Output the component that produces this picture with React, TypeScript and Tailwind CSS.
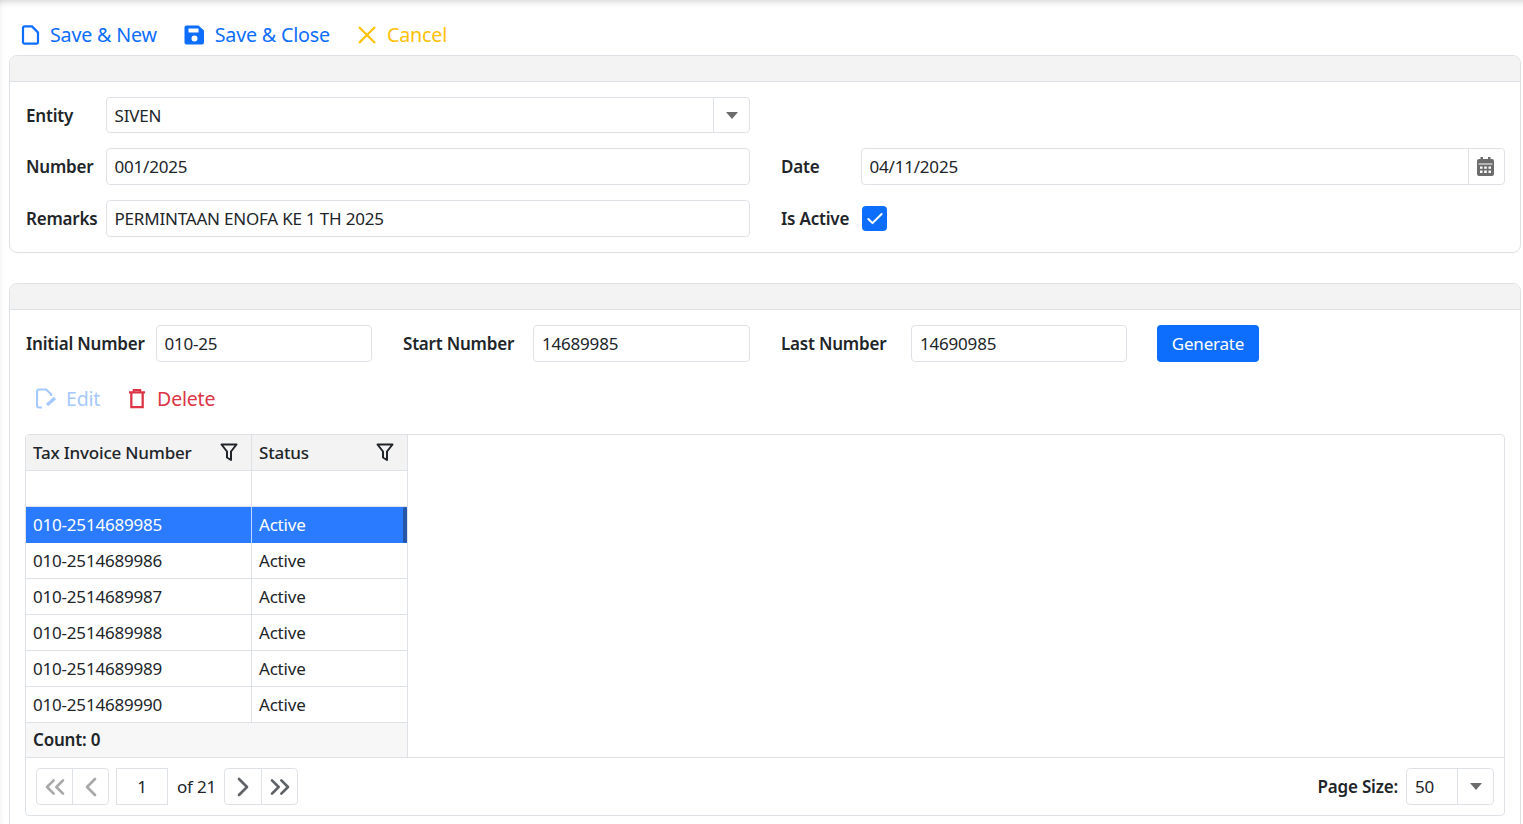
import { Check, ChevronLeft, ChevronRight, ChevronsLeft, ChevronsRight } from "lucide-react";

const rows = ["010-2514689985", "010-2514689986", "010-2514689987", "010-2514689988", "010-2514689989", "010-2514689990"];

function Caret() {
  return (
    <svg width="12" height="7" viewBox="0 0 12 7" className="fill-[#6c6c6c]">
      <path d="M0 0h12L6 7z" />
    </svg>
  );
}

function Filter() {
  return (
    <svg width="18" height="19" viewBox="0 0 18 19" fill="none" stroke="#212529" strokeWidth="2" strokeLinejoin="round">
      <path d="M1.500 1.500h15l-5.500 7v8.500l-4-2.500v-6z" />
    </svg>
  );
}

function Field({ value, className }: { value: string; className: string }) {
  return (
    <div className={`flex items-center border border-[#dee2e6] rounded-[4px] px-[7.5px] bg-white ${className}`}>
      {value}
    </div>
  );
}

function Label({ text, className }: { text: string; className: string }) {
  return <div className={`font-semibold shrink-0 ${className}`}>{text}</div>;
}

export default function App() {
  return (
    <div
      className="h-[824px] overflow-hidden bg-white text-[#212529] text-[17px] shadow-[inset_0_7px_6px_-5px_rgba(0,0,0,0.16),inset_7px_0_6px_-6px_rgba(0,0,0,0.05)] pl-[9px] pr-[2px]"
      style={{ fontFamily: '"Noto Sans", "Open Sans", sans-serif', letterSpacing: "-0.2px" }}
    >
      {/* Barre d'actions */}
      <div className="h-[55px] pt-[15px] flex items-center pl-[12px] text-[19.7px]">
        <div className="flex items-center gap-[10px] text-[#0d6efd] mr-[27px]">
          <svg width="19" height="20" viewBox="0 0 19 20" fill="none" stroke="#0d6efd" strokeWidth="2.2">
            <path d="M2 3a1.600 1.600 0 0 1 1.600-1.600h7.400l6 6V17a1.600 1.600 0 0 1-1.600 1.600H3.600A1.600 1.600 0 0 1 2 17z" />
          </svg>
          <span>Save &amp; New</span>
        </div>
        <div className="flex items-center gap-[10px] text-[#0d6efd] mr-[27px]">
          <svg width="21" height="20" viewBox="0 0 21 20" fill="#0d6efd">
            <path d="M2.500 0.500h12l5.500 5v12a2 2 0 0 1-2 2H2.500a2 2 0 0 1-2-2v-15a2 2 0 0 1 2-2zM4.500 3.500v4h10v-4zM10.500 10.500a3 3 0 1 0 0 6 3 3 0 0 0 0-6z" fillRule="evenodd" />
          </svg>
          <span>Save &amp; Close</span>
        </div>
        <div className="flex items-center gap-[10px] text-[#ffc107]">
          <svg width="20" height="20" viewBox="0 0 20 20" fill="none" stroke="#ffc107" strokeWidth="2.200">
            <path d="M2 2l16 16M18 2L2 18" />
          </svg>
          <span>Cancel</span>
        </div>
      </div>

      {/* Carte entête */}
      <div className="h-[198px] border border-[#dee2e6] rounded-[8px] overflow-hidden">
        <div className="h-[26px] bg-[#f3f3f3] border-b border-[#dee2e6]" />
        <div className="pt-[15px] pl-[16px] pr-[15px] flex flex-col">
          <div className="flex items-center h-[36px]">
            <Label text="Entity" className="w-[80px] pt-px" />
            <div className="w-[644px] h-full flex items-center border border-[#dee2e6] rounded-[4px]">
              <div className="flex-1 px-[7.5px] pt-px">SIVEN</div>
              <div className="w-[36px] h-full border-l border-[#dee2e6] flex items-center justify-center">
                <Caret />
              </div>
            </div>
          </div>
          <div className="flex items-center h-[37px] mt-[15px]">
            <Label text="Number" className="w-[80px]" />
            <Field value="001/2025" className="w-[644px] h-full" />
            <Label text="Date" className="ml-[31px] w-[80px]" />
            <div className="flex-1 h-full flex items-center border border-[#dee2e6] rounded-[4px]">
              <div className="flex-1 px-[7.5px]">04/11/2025</div>
              <div className="w-[36px] h-full border-l border-[#dee2e6] flex items-center justify-center">
                <svg width="17" height="19" viewBox="0 0 17 19" fill="#6c6c6c" className="-ml-[2px]">
                  <path
                    fillRule="evenodd"
                    d="M3.500 0h2.500v2h5V0h2.500v2H15a2 2 0 0 1 2 2v13a2 2 0 0 1-2 2H2a2 2 0 0 1-2-2V4a2 2 0 0 1 2-2h1.500zM1.500 6.500v1h14v-1zM3 9.500h2.500v2.200H3zM7.200 9.500h2.600v2.200H7.200zM11.500 9.500H14v2.200h-2.500zM3 13.500h2.500v2.500H3zM7.200 13.500h2.600v2.500H7.200zM11.500 13.500H14v2.500h-2.500z"
                  />
                </svg>
              </div>
            </div>
          </div>
          <div className="flex items-center h-[37px] mt-[15px]">
            <Label text="Remarks" className="w-[80px]" />
            <Field value="PERMINTAAN ENOFA KE 1 TH 2025" className="w-[644px] h-full" />
            <Label text="Is Active" className="ml-[31px] w-[81px]" />
            <div className="w-[25px] h-[25px] rounded-[4px] bg-[#0d6efd] flex items-center justify-center">
              <Check size={20} color="white" strokeWidth={2.4} />
            </div>
          </div>
        </div>
      </div>

      {/* Carte numéros */}
      <div className="mt-[30px] h-[600px] border border-[#dee2e6] rounded-[8px] overflow-hidden">
        <div className="h-[26px] bg-[#f3f3f3] border-b border-[#dee2e6]" />
        <div className="pt-[15px] pl-[16px] pr-[15px]">
          <div className="flex items-center h-[37px]">
            <Label text="Initial Number" className="w-[130px]" />
            <Field value="010-25" className="w-[216px] h-full" />
            <Label text="Start Number" className="ml-[31px] w-[130px]" />
            <Field value="14689985" className="w-[217px] h-full pl-2" />
            <Label text="Last Number" className="ml-[31px] w-[130px]" />
            <Field value="14690985" className="w-[216px] h-full pl-2" />
            <div className="ml-[30px] w-[102px] h-full bg-[#0d6efd] rounded-[4px] text-white flex items-center justify-center">
              Generate
            </div>
          </div>

          <div className="h-[72px] pt-px pl-[10px] flex items-center text-[19.5px]">
            <div className="flex items-center gap-[9px] text-[#a6c9fd] mr-[28px]">
              <svg width="21" height="21" viewBox="0 0 21 21" fill="none" stroke="#a6c9fd" strokeWidth="2.200">
                <path d="M6 19.500H3a2 2 0 0 1-2-2v-14a2 2 0 0 1 2-2h7l5 4.500v2" />
                <path d="M11 17l8-7" strokeWidth="3.200" />
                <path d="M9 19.500h.1" />
              </svg>
              <span>Edit</span>
            </div>
            <div className="flex items-center gap-[11px] text-[#dc3545]">
              <svg width="18" height="21" viewBox="0 0 19 21" fill="none" stroke="#dc3545" strokeWidth="2.400">
                <path d="M1 4h17" />
                <path d="M6 4V1.500h7V4" strokeWidth="2" />
                <path d="M3.500 4v15.500h12V4" />
              </svg>
              <span>Delete</span>
            </div>
          </div>

          {/* Grille */}
          <div className="-ml-px w-[1480px] h-[382px] border border-[#dee2e6] rounded-[4px] flex flex-col">
            <div className="w-[382px] border-r border-[#dee2e6]">
              <div className="h-[36px] flex bg-[#f3f3f3] border-b border-[#dee2e6] font-medium">
                <div className="w-[226px] border-r border-[#dee2e6] pl-[7px] pr-[13px] flex items-center justify-between">
                  <span>Tax Invoice Number</span>
                  <Filter />
                </div>
                <div className="flex-1 pl-[7px] pr-[13px] flex items-center justify-between">
                  <span>Status</span>
                  <Filter />
                </div>
              </div>
              <div className="h-[36px] flex border-b border-[#dee2e6]">
                <div className="w-[226px] border-r border-[#dee2e6]" />
              </div>
              {rows.map((row, i) => (
                <div
                  key={row}
                  className={
                    i === 0
                      ? "relative h-[36px] flex items-center bg-[#2a7bff] text-white"
                      : "h-[36px] flex items-center border-b border-[#dee2e6]"
                  }
                >
                  <div className={`w-[226px] h-full flex items-center pl-[7px] border-r ${i === 0 ? "border-white/70" : "border-[#dee2e6]"}`}>
                    {row}
                  </div>
                  <div className="pl-[7px]">Active</div>
                  {i === 0 && <div className="absolute right-0 top-0 bottom-0 w-[4px] rounded-[2px] bg-[#2457a8]" />}
                </div>
              ))}
              <div className="h-[35px] -mt-px flex items-center pl-[7px] bg-[#f7f7f7] border-t border-[#dee2e6] font-semibold">
                Count: 0
              </div>
            </div>

            {/* Pagination */}
            <div className="flex-1 border-t border-[#dee2e6] pl-[10px] pr-[10px] flex items-center">
              <div className="h-[37px] flex border border-[#dee2e6] rounded-[4px]">
                <div className="w-[36px] h-full flex items-center justify-center border-r border-[#dee2e6]">
                  <ChevronsLeft size={32} color="#a9a9a9" strokeWidth={2} />
                </div>
                <div className="w-[35px] h-full flex items-center justify-center">
                  <ChevronLeft size={32} color="#a9a9a9" strokeWidth={2} />
                </div>
              </div>
              <div className="ml-[7px] w-[52px] h-[37px] flex items-center justify-center border border-[#dee2e6]">1</div>
              <div className="ml-[9px] w-[47px]">of 21</div>
              <div className="h-[37px] flex border border-[#dee2e6] rounded-[4px]">
                <div className="w-[37px] h-full flex items-center justify-center border-r border-[#dee2e6]">
                  <ChevronRight size={32} color="#5f6368" strokeWidth={2} />
                </div>
                <div className="w-[35px] h-full flex items-center justify-center">
                  <ChevronsRight size={32} color="#5f6368" strokeWidth={2} />
                </div>
              </div>
              <div className="ml-auto font-semibold mr-[8px]">Page Size:</div>
              <div className="w-[88px] h-[37px] flex items-center border border-[#dee2e6] rounded-[4px]">
                <div className="flex-1 pl-2">50</div>
                <div className="w-[36px] h-full border-l border-[#dee2e6] flex items-center justify-center">
                  <Caret />
                </div>
              </div>
            </div>
          </div>
        </div>
      </div>
    </div>
  );
}
